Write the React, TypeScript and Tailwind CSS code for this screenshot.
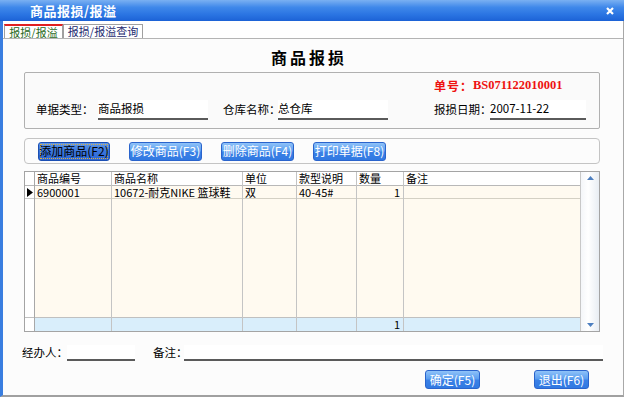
import React from "react";

type Col = {
  key: string;
  title: string;
  value: string;
  footer: string;
  cls: string;
  right?: boolean;
};

const columns: Col[] = [
  { key: "code", title: "商品编号", value: "6900001", footer: "", cls: "w-[77px]" },
  { key: "name", title: "商品名称", value: "10672-耐克NIKE 篮球鞋", footer: "", cls: "w-[131px]" },
  { key: "unit", title: "单位", value: "双", footer: "", cls: "w-[54px]" },
  { key: "spec", title: "款型说明", value: "40-45#", footer: "", cls: "w-[60px]" },
  { key: "qty", title: "数量", value: "1", footer: "1", cls: "w-[47px]", right: true },
  { key: "memo", title: "备注", value: "", footer: "", cls: "w-[176px]" },
];

function BlueButton({
  label,
  width,
  focused,
}: {
  label: string;
  width: string;
  focused?: boolean;
}) {
  if (focused) {
    return (
      <button
        className={`${width} h-[19px] rounded-[3px] border border-[#1b4fb4] bg-[linear-gradient(to_bottom,#5f98ea,#3a76dc_50%,#2c66d2)] p-[1px] text-[12px] leading-none text-black`}
      >
        <span className="flex h-full items-center justify-center border border-dotted border-[#e0b040] whitespace-nowrap">
          {label}
        </span>
      </button>
    );
  }
  return (
    <button
      className={`${width} h-[19px] rounded-[3px] border border-[#2a64cc] bg-[linear-gradient(to_bottom,#8fc2f8,#5c9ff0_45%,#3a80e6_55%,#3179e2)] text-[12px] leading-none text-white whitespace-nowrap`}
    >
      {label}
    </button>
  );
}

function Field({ width, value }: { width: string; value?: string }) {
  return (
    <div
      className={`${width} h-[20px] bg-white border-b-2 border-[#5a5a5a] flex items-center text-black whitespace-nowrap`}
    >
      {value}
    </div>
  );
}

export default function App() {
  return (
    <div className="w-[624px] h-[397px] flex flex-col bg-white overflow-hidden font-['Noto_Sans_CJK_SC','Noto_Sans',sans-serif] text-[12px] text-black">
      {/* Title bar */}
      <div className="h-[21px] shrink-0 flex items-center bg-[linear-gradient(to_bottom,#7ab0f2,#3f88ea_35%,#2a74e2_70%,#1c62d6)]">
        <div className="w-[30px] shrink-0" />
        <span className="flex-1 text-[13px] font-bold text-white tracking-[0.5px]">
          商品报损/报溢
        </span>
        <svg width="8" height="8" viewBox="0 0 8 8" className="mr-[10px]">
          <path d="M1 1L7 7M7 1L1 7" stroke="white" strokeWidth="2.2" />
        </svg>
      </div>

      {/* Window body */}
      <div className="flex-1 flex flex-col border-l-[3px] border-l-[#3a7ee0] border-r border-r-[#a8a8a8] border-b-2 border-b-[#a0a0a0]">
        {/* Tabs */}
        <div className="h-[17px] shrink-0 flex items-end pl-[1px]">
          <div className="h-[14px] w-[59px] flex items-center justify-center bg-white border-x border-[#a0a0a0] border-t-2 border-t-[#e02020] text-[11px] leading-none text-[#2a6a22] whitespace-nowrap">
            报损/报溢
          </div>
          <div className="h-[14px] w-[80px] flex items-center justify-center bg-white border-x border-t border-[#a0a0a0] text-[11px] leading-none text-[#1c2a70] whitespace-nowrap">
            报损/报溢查询
          </div>
        </div>

        {/* Tab panel */}
        <div className="flex-1 flex flex-col bg-[#fcfcfc] border-t border-[#b4b4b4]">
          <div className="h-[33px] shrink-0 flex items-center justify-center pr-[8px] pt-[2px] text-[16px] font-bold tracking-[3px]">
            商品报损
          </div>

          {/* Bill info */}
          <div className="ml-[21px] w-[576px] h-[57px] shrink-0 flex flex-col border border-[#b0b0b0] rounded-[2px] bg-[#fafafa]">
            <div className="h-[25px] flex items-center pl-[409px] text-[12px] font-bold text-[#ee1111] whitespace-nowrap">
              <span className="tracking-[1px]">单号：</span>
              <span className="font-['Liberation_Serif',serif] text-[12.5px]">BS071122010001</span>
            </div>
            <div className="h-[22px] flex items-end pl-[11px] text-[11.5px] whitespace-nowrap">
              <div className="w-[62px] h-[20px] flex items-center">单据类型：</div>
              <Field width="w-[110px]" value="商品报损" />
              <div className="w-[15px]" />
              <div className="w-[55px] h-[20px] flex items-center">仓库名称：</div>
              <Field width="w-[110px]" value="总仓库" />
              <div className="w-[46px]" />
              <div className="w-[56px] h-[20px] flex items-center">报损日期：</div>
              <Field width="w-[96px]" value="2007-11-22" />
            </div>
          </div>

          {/* Toolbar */}
          <div className="ml-[21px] mt-[9px] w-[576px] h-[26px] shrink-0 flex items-center pl-[13px] gap-[19px] border border-[#c4c4c4] rounded-[4px]">
            <BlueButton label="添加商品(F2)" width="w-[72px]" focused />
            <BlueButton label="修改商品(F3)" width="w-[73px]" />
            <BlueButton label="删除商品(F4)" width="w-[73px]" />
            <BlueButton label="打印单据(F8)" width="w-[73px]" />
          </div>

          {/* Grid */}
          <div className="ml-[21px] mt-[7px] w-[576px] h-[161px] shrink-0 flex border border-[#a4a4a4] text-[11px] leading-none">
            {/* row selector */}
            <div className="w-[10px] flex flex-col border-r border-[#a8a8a8] bg-white">
              <div className="h-[14px] border-b border-[#b8b8b8]" />
              <div className="h-[13px] border-b border-[#c8c8c8] flex items-center justify-center">
                <svg width="6" height="9" viewBox="0 0 6 9">
                  <path d="M0 0L6 4.5L0 9Z" fill="black" />
                </svg>
              </div>
              <div className="flex-1" />
              <div className="h-[14px] border-t border-[#c0c0c0]" />
            </div>
            {columns.map((c) => (
              <div
                key={c.key}
                className={`${c.cls} flex flex-col ${c.key === "memo" ? "" : "border-r border-[#c4c4c4]"}`}
              >
                <div className="h-[14px] border-b border-[#b8b8b8] bg-white flex items-center px-[2px] whitespace-nowrap">
                  {c.title}
                </div>
                <div
                  className={`h-[13px] border-b border-[#d4d0c4] bg-[#fffaf0] flex items-center px-[2px] whitespace-nowrap ${c.right ? "justify-end pr-[3px]" : ""}`}
                >
                  {c.value}
                </div>
                <div className="flex-1 bg-[#fffaf0]" />
                <div
                  className={`h-[14px] border-t border-[#c0c0c0] bg-[#d9eefb] flex items-center px-[2px] ${c.right ? "justify-end pr-[3px]" : ""}`}
                >
                  {c.footer}
                </div>
              </div>
            ))}
            {/* scrollbar */}
            <div className="flex-1 flex flex-col items-center justify-between border-l border-[#c8c8c8] bg-[linear-gradient(to_right,#f4f6f9,#ffffff_40%,#e8edf3)] py-[4px]">
              <svg width="7" height="4" viewBox="0 0 7 4">
                <path d="M0 4L3.5 0L7 4Z" fill="#4d7fc0" />
              </svg>
              <svg width="7" height="4" viewBox="0 0 7 4">
                <path d="M0 0L3.5 4L7 0Z" fill="#4d7fc0" />
              </svg>
            </div>
          </div>

          {/* Footer fields */}
          <div className="ml-[19px] mt-[13px] h-[16px] shrink-0 flex items-end text-[11.5px] whitespace-nowrap">
            <div className="w-[45px] h-[16px] flex items-center">经办人：</div>
            <div className="w-[68px] h-[16px] bg-white border-b-2 border-[#5a5a5a]" />
            <div className="w-[18px]" />
            <div className="w-[31px] h-[16px] flex items-center">备注：</div>
            <div className="w-[419px] h-[16px] bg-white border-b-2 border-[#5a5a5a]" />
          </div>

          {/* Actions */}
          <div className="ml-[422px] mt-[9px] shrink-0 flex gap-[54px]">
            <BlueButton label="确定(F5)" width="w-[55px]" />
            <BlueButton label="退出(F6)" width="w-[55px]" />
          </div>
        </div>
      </div>
    </div>
  );
}
